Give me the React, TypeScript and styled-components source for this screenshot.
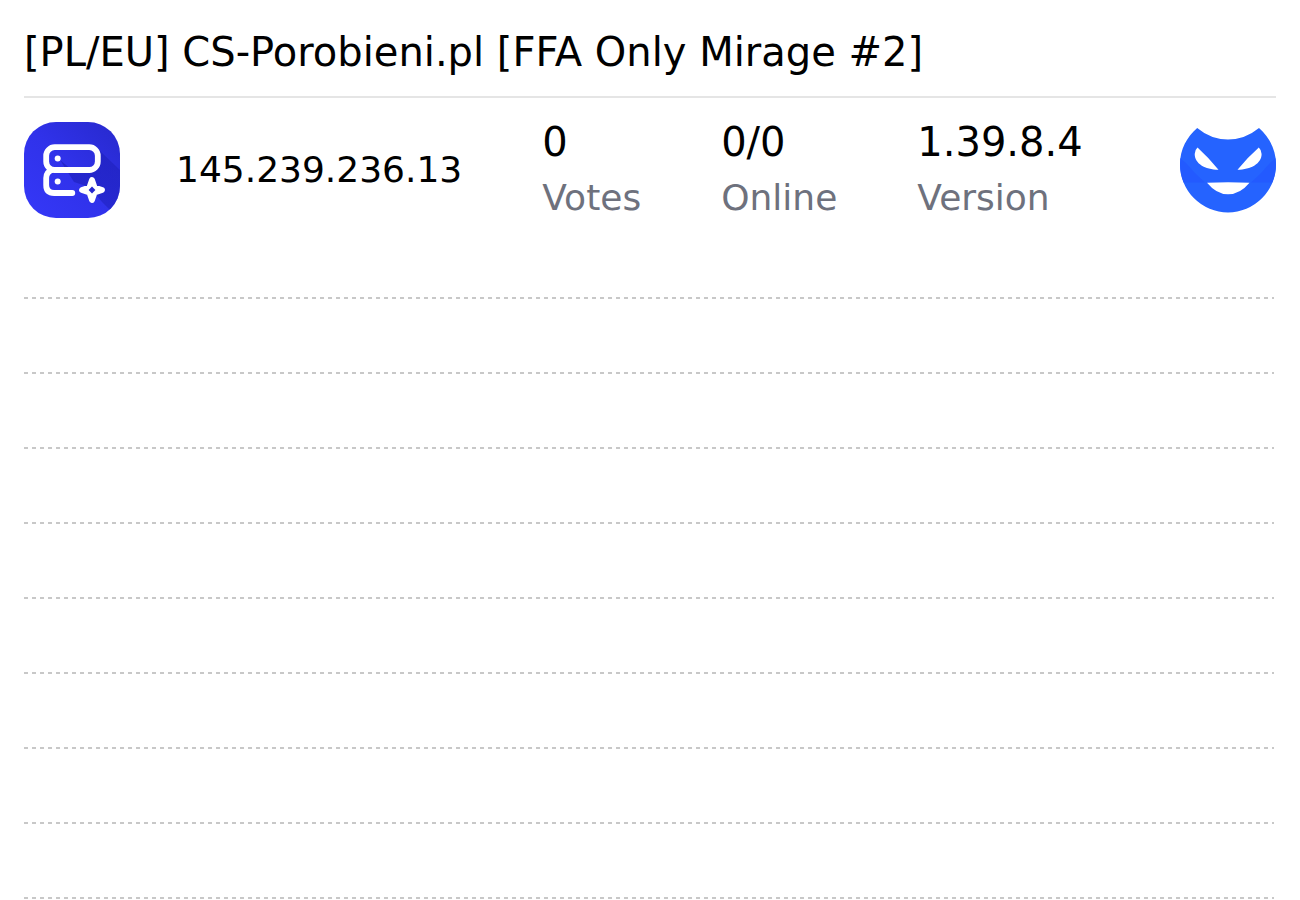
import React from "react";
import styled, { createGlobalStyle } from "styled-components";

const GlobalStyle = createGlobalStyle`
  *, *::before, *::after { box-sizing: border-box; }
  body {
    margin: 0;
    background: #ffffff;
    color: #000000;
    font-family: "DejaVu Sans", sans-serif;
    overflow: hidden;
  }
`;

const Widget = styled.main`
  padding: 24px 24px 0;
`;

const Title = styled.h1`
  margin: 0;
  padding-bottom: 16px;
  border-bottom: 2px solid #e5e5e5;
  font-size: 40px;
  font-weight: 400;
  line-height: 56px;
  white-space: nowrap;
`;

const Summary = styled.section`
  display: flex;
  align-items: center;
  justify-content: space-between;
  padding-top: 16px;
`;

const Picture = styled.svg`
  display: block;
  flex: none;
  width: 96px;
  height: 96px;
`;

const Details = styled.div`
  display: flex;
  flex: 1;
  align-items: center;
  gap: 80px;
  padding-left: 56px;
`;

const Address = styled.span`
  font-size: 36px;
  line-height: 48px;
`;

const Stats = styled.dl`
  display: flex;
  gap: 80px;
  margin: 0;
`;

const Stat = styled.div`
  display: flex;
  flex-direction: column-reverse;
`;

const StatLabel = styled.dt`
  color: #6e717d;
  font-size: 36px;
  line-height: 56px;
`;

const StatValue = styled.dd`
  margin: 0;
  font-size: 40px;
  line-height: 56px;
`;

const Chart = styled.div`
  display: grid;
  grid-template-rows: 73px;
  grid-auto-rows: 75px;
  margin-right: 2px;
`;

const GridLine = styled.div`
  background: repeating-linear-gradient(to right, #c8c8c8 0 4px, transparent 4px 8px)
    left bottom / 100% 2px no-repeat;
`;

const stats = [
  { label: "Votes", value: "0" },
  { label: "Online", value: "0/0" },
  { label: "Version", value: "1.39.8.4" },
];

const gridLines = Array.from({ length: 9 }, (_, index) => index);

function ServerLogo() {
  return (
    <Picture viewBox="0 0 96 96" aria-hidden="true">
      <defs>
        <linearGradient id="tile" x1="0" y1="1" x2="1" y2="0">
          <stop offset="0" stopColor="#3538f8" />
          <stop offset="0.5" stopColor="#3032ea" />
          <stop offset="1" stopColor="#2729cc" />
        </linearGradient>
        <linearGradient id="shade" gradientUnits="userSpaceOnUse" x1="34" y1="36" x2="94" y2="72">
          <stop offset="0" stopColor="#1e20bc" stopOpacity="0.7" />
          <stop offset="1" stopColor="#1e20bc" stopOpacity="0.55" />
        </linearGradient>
        <clipPath id="tile-clip">
          <rect width="96" height="96" rx="32" />
        </clipPath>
      </defs>
      <g clipPath="url(#tile-clip)">
        <rect width="96" height="96" fill="url(#tile)" />
        <path d="M36 38 48 48H70L75 28 96 48V96H94L78 80 68 68 62 64 50 60Z" fill="url(#shade)" />
      </g>
      <g fill="none" stroke="#ffffff" strokeWidth="5.8" strokeLinecap="round" strokeLinejoin="round">
        <rect x="22.2" y="25.2" width="51.6" height="22.8" rx="8.5" />
        <path d="M28 48Q22.2 50 22.2 56V63Q22.2 71 30.2 71H48.3" />
      </g>
      <path
        d="M68 58 70.6 65.4 78 68 70.6 70.6 68 78 65.4 70.6 58 68 65.400 65.400Z"
        fill="#ffffff"
        stroke="#ffffff"
        strokeWidth="5.8"
        strokeLinejoin="round"
      />
      <circle cx="33.7" cy="36.6" r="3" fill="#ffffff" />
      <circle cx="33.7" cy="59.5" r="3" fill="#ffffff" />
      <path d="M68 64.6 71.4 68 68 71.4 64.6 68Z" fill="#2527cf" />
    </Picture>
  );
}

function MaskLogo() {
  return (
    <Picture viewBox="0 0 96 96" aria-hidden="true">
      <defs>
        <clipPath id="mask-clip">
          <path d="M17.2 6Q31 17.5 48 17.5T79 6C89 15 96 27 96 42.2A48 48.2 0 0 1 0 42.2C0 27 7 15 17.2 6Z" />
        </clipPath>
      </defs>
      <g clipPath="url(#mask-clip)">
        <rect width="96" height="96" fill="#2563ff" />
        <path d="M0 36 6 41Q15 52 25 60.5H3L0 56ZM96 36 90 41Q81 52 71 60.5H93L96 56Z" fill="#235aff" />
      </g>
      <path
        d="M17.500 25.500Q28 35 38.500 47.700C25 47.700 14.700 41.500 14.700 32Q14.700 28 17.500 25.500ZM78.800 25.500Q68 35 57.500 47.700C71 47.700 81.600 41.500 81.600 32Q81.600 28 78.800 25.500ZM27 60.700Q48 59.800 69.500 60.700Q60 72.300 48 72.300Q36.500 72.300 27 60.700Z"
        fill="#ffffff"
      />
    </Picture>
  );
}

export default function App() {
  return (
    <>
      <GlobalStyle />
      <Widget>
        <Title>[PL/EU] CS-Porobieni.pl [FFA Only Mirage #2]</Title>
        <Summary>
          <ServerLogo />
          <Details>
            <Address>145.239.236.13</Address>
            <Stats>
              {stats.map(({ label, value }) => (
                <Stat key={label}>
                  <StatLabel>{label}</StatLabel>
                  <StatValue>{value}</StatValue>
                </Stat>
              ))}
            </Stats>
          </Details>
          <MaskLogo />
        </Summary>
        <Chart aria-hidden="true">
          {gridLines.map((line) => (
            <GridLine key={line} />
          ))}
        </Chart>
      </Widget>
    </>
  );
}
